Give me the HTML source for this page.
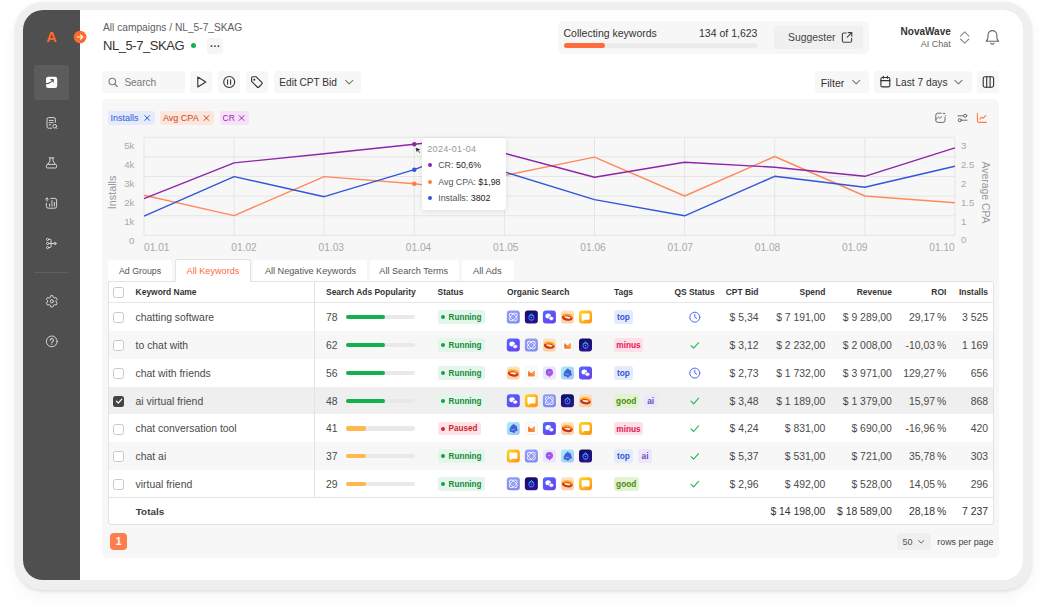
<!DOCTYPE html>
<html lang="en"><head><meta charset="utf-8"><title>NL_5-7_SKAG – All Keywords</title>
<style>
html,body{margin:0;padding:0;background:#fff;}
body{width:1046px;height:615px;position:relative;overflow:hidden;font-family:"Liberation Sans",sans-serif;}
.t{position:absolute;white-space:nowrap;}
.b{position:absolute;box-sizing:border-box;}
svg{position:absolute;left:0;top:0;overflow:visible;}
.ic{position:absolute;width:13px;height:13px;border-radius:3px;overflow:hidden;}
.ic svg{position:absolute;left:0;top:0;width:13px;height:13px;}
</style></head><body>

<div class="b" style="left:15.00px;top:2.00px;width:1016.80px;height:588.20px;background:#efefef;border-radius:28px;box-shadow:0 1.5px 3px rgba(120,70,50,0.13),0 8px 18px rgba(0,0,0,0.035);"></div>
<div class="b" style="left:23px;top:10px;width:1000px;height:570px;background:#fff;border-radius:20px;overflow:hidden;">
<div class="b" style="left:0;top:0;width:57px;height:570px;background:#4f4f4f;"></div>
</div>
<div class="t" style="top:30.30px;height:14px;line-height:14px;font-size:14.5px;color:#ff6a2b;font-weight:700;left:-48.50px;width:200px;text-align:center;">A</div>
<div class="b" style="left:34.40px;top:65.00px;width:34.40px;height:34.60px;background:#5c5c5c;border-radius:3px;"></div>
<svg width="1046" height="615" viewBox="0 0 1046 615">
<circle cx="80.1" cy="37" r="6.3" fill="#ff6a2b"/>
<path d="M77.3 37h5.4M80.5 34.8l2.2 2.2-2.2 2.2" fill="none" stroke="#fff" stroke-width="1.15" stroke-linecap="round" stroke-linejoin="round"/>
<rect x="46" y="76.8" width="11.2" height="11.2" rx="2.2" fill="#fff"/>
<path d="M46 83.6c2.2 0 4.6-.4 6.6-3.4M50.8 79.6h2.4v2.4" fill="none" stroke="#4f4f4f" stroke-width="1.1" stroke-linecap="round" stroke-linejoin="round"/>
<g fill="none" stroke="#d6d6d6" stroke-width="1" stroke-linecap="round" stroke-linejoin="round">
<path d="M51.6 128.2h-3a1.6 1.6 0 0 1-1.6-1.6v-7.4a1.6 1.6 0 0 1 1.6-1.6h5.2a1.6 1.6 0 0 1 1.6 1.6v3"/>
<path d="M49.2 120.4h4M49.2 122.6h4M49.2 124.8h1.6"/>
<circle cx="54.7" cy="126.2" r="1.85"/><path d="M56.1 127.6l.9.9"/>
<path d="M49.3 157.9h4.4M50 157.9v3l-2.2 3.5M53 157.9v3l2.2 3.5M47.4 164.4h8.2a.9.9 0 0 1 .9.9v1.8a.9.9 0 0 1-.9.9h-8.2a.9.9 0 0 1-.9-.9v-1.8a.9.9 0 0 1 .9-.9z"/>
<path d="M46.4 203.2v3.2a1.8 1.8 0 0 0 1.8 1.8h6.6a1.8 1.8 0 0 0 1.8-1.8v-6.2a1.8 1.8 0 0 0-1.8-1.8h-4"/>
<path d="M47 201v-3M45.7 199.2l1.3-1.3 1.3 1.3M49.6 206.2v-2.2M52 206.2v-5.6M54.4 206.2v-3.8"/>
<circle cx="47.6" cy="239.4" r="1.1"/><circle cx="47.6" cy="243.5" r="1.1"/><circle cx="47.6" cy="247.6" r="1.1"/><circle cx="55" cy="243.5" r="1.1"/>
<path d="M48.7 239.4h1.4a1 1 0 0 1 1 1v6.2a1 1 0 0 1-1 1h-1.4M48.7 243.5h5.2"/>
<g transform="translate(0.5 0)">
<path d="M49.76 297.29L50.21 295.70L52.39 295.70L52.84 297.29L54.01 297.96L55.60 297.56L56.69 299.44L55.55 300.63L55.55 301.97L56.69 303.16L55.60 305.04L54.01 304.64L52.84 305.31L52.39 306.90L50.21 306.90L49.76 305.31L48.59 304.64L47.00 305.04L45.91 303.16L47.05 301.97L47.05 300.63L45.91 299.44L47.00 297.56L48.59 297.96z"/>
<circle cx="51.3" cy="301.3" r="1.6"/>
<circle cx="51.3" cy="341.4" r="5.4"/>
<path d="M49.8 340.2a1.6 1.6 0 1 1 2.4 1.4c-.6.35-.9.7-.9 1.4M51.3 344.4v.1" stroke-width="1.05"/>
</g>
</g>
<path d="M34 272.4h35" stroke="#626262" stroke-width="1"/>
</svg>
<div class="t" style="top:21.30px;height:14px;line-height:14px;font-size:10.2px;color:#5e5e5e;font-weight:400;left:103.00px;">All campaigns / NL_5-7_SKAG</div>
<div class="t" style="top:39.40px;height:14px;line-height:14px;font-size:13px;color:#333;font-weight:400;letter-spacing:-0.45px;left:103.00px;">NL_5-7_SKAG</div>
<div class="b" style="left:190.70px;top:43.30px;width:5.20px;height:5.20px;background:#12b04f;border-radius:3px;"></div>
<div class="b" style="left:207.00px;top:37.80px;width:16.40px;height:16.20px;background:#f6f6f6;border-radius:3px;"></div>
<div class="t" style="top:39.60px;height:14px;line-height:14px;font-size:10px;color:#333;font-weight:700;letter-spacing:0.2px;left:115.20px;width:200px;text-align:center;">···</div>
<div class="b" style="left:558.00px;top:21.00px;width:310.50px;height:32.50px;background:#f7f7f7;border-radius:5px;"></div>
<div class="t" style="top:26.00px;height:14px;line-height:14px;font-size:10.5px;color:#333;font-weight:400;left:563.50px;">Collecting keywords</div>
<div class="t" style="top:26.00px;height:14px;line-height:14px;font-size:10.5px;color:#333;font-weight:400;right:288.60px;text-align:right;">134 of 1,623</div>
<div class="b" style="left:563.50px;top:43.00px;width:194.10px;height:5.30px;background:#ececec;border-radius:3px;"></div>
<div class="b" style="left:563.50px;top:43.00px;width:41.30px;height:5.30px;background:#ff6b3d;border-radius:3px;"></div>
<div class="b" style="left:774.00px;top:26.00px;width:89.00px;height:22.50px;background:#f0f0f0;border-radius:3px;"></div>
<div class="t" style="top:31.00px;height:14px;line-height:14px;font-size:10.4px;color:#444;font-weight:400;left:788.00px;">Suggester</div>
<div class="t" style="top:25.00px;height:14px;line-height:14px;font-size:10.0px;color:#333;font-weight:700;right:95.20px;text-align:right;">NovaWave</div>
<div class="t" style="top:36.60px;height:14px;line-height:14px;font-size:9px;color:#666;font-weight:400;right:95.20px;text-align:right;">AI Chat</div>
<div class="b" style="left:102.00px;top:71.00px;width:82.80px;height:21.80px;background:#f7f7f7;border-radius:3px;"></div>
<div class="t" style="top:75.70px;height:14px;line-height:14px;font-size:10.2px;color:#777;font-weight:400;letter-spacing:-0.12px;left:124.40px;">Search</div>
<div class="b" style="left:190.40px;top:71.00px;width:22.10px;height:21.80px;background:#f7f7f7;border-radius:3px;"></div>
<div class="b" style="left:218.20px;top:71.00px;width:21.90px;height:21.80px;background:#f7f7f7;border-radius:3px;"></div>
<div class="b" style="left:245.80px;top:71.00px;width:22.10px;height:21.80px;background:#f7f7f7;border-radius:3px;"></div>
<div class="b" style="left:273.60px;top:71.00px;width:87.40px;height:21.80px;background:#f7f7f7;border-radius:3px;"></div>
<div class="t" style="top:75.60px;height:14px;line-height:14px;font-size:10.1px;color:#333;font-weight:400;left:279.30px;">Edit CPT Bid</div>
<div class="b" style="left:815.00px;top:71.00px;width:54.00px;height:21.80px;background:#f7f7f7;border-radius:3px;"></div>
<div class="t" style="top:75.60px;height:14px;line-height:14px;font-size:10.6px;color:#333;font-weight:400;left:820.80px;">Filter</div>
<div class="b" style="left:874.00px;top:71.00px;width:97.50px;height:21.80px;background:#f7f7f7;border-radius:3px;"></div>
<div class="t" style="top:75.60px;height:14px;line-height:14px;font-size:10.2px;color:#333;font-weight:400;left:895.40px;">Last 7 days</div>
<div class="b" style="left:977.00px;top:71.00px;width:22.20px;height:21.80px;background:#f7f7f7;border-radius:3px;"></div>
<div class="b" style="left:102.00px;top:98.50px;width:897.20px;height:459.10px;background:#f7f7f7;border-radius:5px;"></div>
<div class="b" style="left:107.80px;top:111.00px;width:47.20px;height:13.80px;background:#e3ebfc;border-radius:3px;"></div>
<div class="t" style="top:111.00px;height:14px;line-height:14px;font-size:9px;color:#3558d6;font-weight:400;left:110.50px;">Installs</div>
<div class="b" style="left:160.30px;top:111.00px;width:53.70px;height:13.80px;background:#fde6dc;border-radius:3px;"></div>
<div class="t" style="top:111.00px;height:14px;line-height:14px;font-size:9px;color:#cf4519;font-weight:400;left:163.00px;">Avg CPA</div>
<div class="b" style="left:219.70px;top:111.00px;width:29.50px;height:13.80px;background:#f7e1f9;border-radius:3px;"></div>
<div class="t" style="top:111.00px;height:14px;line-height:14px;font-size:8.4px;color:#9c27b0;font-weight:400;left:222.60px;">CR</div><svg width="1046" height="615" viewBox="0 0 1046 615">
<g stroke="#e5e5e5" stroke-width="1" fill="none">
<path d="M144.0 137.3H954.9"/>
<path d="M144.0 156.9H954.9"/>
<path d="M144.0 176.5H954.9"/>
<path d="M144.0 196.1H954.9"/>
<path d="M144.0 215.7H954.9"/>
<path d="M144.0 235.4H954.9"/>
<path d="M144.0 137.3V235.4"/>
<path d="M234.1 137.3V235.4"/>
<path d="M324.2 137.3V235.4"/>
<path d="M414.3 137.3V235.4"/>
<path d="M504.4 137.3V235.4"/>
<path d="M594.5 137.3V235.4"/>
<path d="M684.6 137.3V235.4"/>
<path d="M774.7 137.3V235.4"/>
<path d="M864.8 137.3V235.4"/>
<path d="M954.9 137.3V235.4"/>
</g>
<polyline points="144.0,195.3 234.1,215.6 324.2,176.6 414.3,183.8 432.0,185.9 504.4,175.5 594.5,157.1 684.6,196.0 774.7,156.5 864.8,196.0 954.9,202.7" fill="none" stroke="#ff8a5e" stroke-width="1.4" stroke-linejoin="round"/>
<polyline points="144.0,216.2 234.1,176.6 324.2,196.7 414.3,169.7 432.0,162.9 504.4,171.8 594.5,199.6 684.6,215.8 774.7,176.3 864.8,187.3 954.9,166.2" fill="none" stroke="#3356d8" stroke-width="1.4" stroke-linejoin="round"/>
<polyline points="144.0,198.7 234.1,162.9 324.2,153.7 414.3,144.2 432.0,142.4 504.4,153.2 594.5,177.2 684.6,162.2 774.7,167.2 864.8,176.3 954.9,147.8" fill="none" stroke="#8e24a8" stroke-width="1.4" stroke-linejoin="round"/>
<circle cx="414.3" cy="144.2" r="2.25" fill="#8e24a8"/>
<circle cx="414.3" cy="169.7" r="2.25" fill="#3356d8"/>
<circle cx="414.3" cy="183.8" r="2.25" fill="#ff7a45"/>
<g font-family="Liberation Sans, sans-serif" font-size="9.6" fill="#a8a8a8">
<text x="134.4" y="149.0" text-anchor="end">5k</text>
<text x="134.4" y="168.0" text-anchor="end">4k</text>
<text x="134.4" y="187.1" text-anchor="end">3k</text>
<text x="134.4" y="206.0" text-anchor="end">2k</text>
<text x="134.4" y="224.9" text-anchor="end">1k</text>
<text x="134.4" y="243.7" text-anchor="end">0</text>
<text x="961" y="148.9">3</text>
<text x="961" y="168.0">2.5</text>
<text x="961" y="187.0">2</text>
<text x="961" y="206.1">1.5</text>
<text x="961" y="224.9">1</text>
<text x="961" y="243.2">0</text>
<text x="144.0" y="251.3" font-size="10.2">01.01</text>
<text x="231.3" y="251.3" font-size="10.2">01.02</text>
<text x="318.5" y="251.3" font-size="10.2">01.03</text>
<text x="405.8" y="251.3" font-size="10.2">01.04</text>
<text x="493.0" y="251.3" font-size="10.2">01.05</text>
<text x="580.3" y="251.3" font-size="10.2">01.06</text>
<text x="667.5" y="251.3" font-size="10.2">01.07</text>
<text x="754.8" y="251.3" font-size="10.2">01.08</text>
<text x="842.0" y="251.3" font-size="10.2">01.09</text>
<text x="929.3" y="251.3" font-size="10.2">01.10</text>
<text transform="translate(116.4 192.4) rotate(-90)" text-anchor="middle" fill="#999" font-size="10.8">Installs</text>
<text transform="translate(981.6 192.5) rotate(90)" text-anchor="middle" fill="#999" font-size="10.4">Average CPA</text>
</g>
<path d="M144.79999999999998 115.6l4.8 4.8M149.6 115.6l-4.8 4.8" stroke="#3558d6" stroke-width="1" stroke-linecap="round" fill="none"/>
<path d="M204.0 115.6l4.8 4.8M208.8 115.6l-4.8 4.8" stroke="#cf4519" stroke-width="1" stroke-linecap="round" fill="none"/>
<path d="M239.2 115.6l4.8 4.8M244.0 115.6l-4.8 4.8" stroke="#9c27b0" stroke-width="1" stroke-linecap="round" fill="none"/>
<g fill="none" stroke="#5a5a5a" stroke-width="0.9" stroke-linecap="round" stroke-linejoin="round">
<path d="M941.2 113.2h-3.4a2 2 0 0 0-2 2v5.2a2 2 0 0 0 2 2h5.2a2 2 0 0 0 2-2v-3.2"/>
<path d="M935.9 119.6l2.6-2.6 1.6 1.4 1.6-1.8M943.2 113.4h1.6M945.4 115.6v.2"/>
<path d="M958 115.8h5.6M961.4 120.2h5.6"/><circle cx="965.2" cy="115.8" r="1.55"/><circle cx="959.8" cy="120.2" r="1.55"/>
</g>
<path d="M977.4 113.2v7.6a1.6 1.6 0 0 0 1.6 1.6h7.4M979.8 119.2l2-2 1.4 1 2.6-2.6" fill="none" stroke="#ff7a45" stroke-width="1.1" stroke-linecap="round" stroke-linejoin="round"/>
<g fill="none" stroke="#333" stroke-width="1.12" stroke-linecap="round" stroke-linejoin="round">
<circle cx="112.3" cy="81.5" r="3.25" stroke="#7c7c7c"/><path d="M114.8 84l2.5 2.5" stroke="#7c7c7c"/>
<path d="M197.8 77v10l8-5z"/>
<circle cx="229.2" cy="82" r="5.5"/><path d="M227.6 79.8v4.4M230.6 79.8v4.4"/>
<path d="M251.6 78v3.4l5.6 5.6a1.2 1.2 0 0 0 1.7 0l2.9-2.9a1.2 1.2 0 0 0 0-1.7l-5.6-5.6h-3.4a1.2 1.2 0 0 0-1.2 1.2z" transform="rotate(0)"/><circle cx="254.3" cy="79.7" r="0.5"/>
<path d="M345.6 80.4l3.6 3.4 3.6-3.4" stroke="#777"/>
<path d="M852.6 80.4l3.6 3.4 3.6-3.4" stroke="#777"/>
<path d="M954.8 80.4l3.6 3.4 3.6-3.4" stroke="#777"/>
<rect x="880.9" y="77.5" width="8.9" height="9.4" rx="1.5"/><path d="M880.9 80.6h8.9M883.3 76.3v2M887.4 76.3v2"/>
<rect x="983.2" y="76.8" width="10.4" height="10.4" rx="1.6"/><path d="M986.7 76.8v10.4M990.1 76.8v10.4"/>
<path d="M846.2 33h-2.4a1.4 1.4 0 0 0-1.4 1.4v6.4a1.4 1.4 0 0 0 1.4 1.4h6.4a1.4 1.4 0 0 0 1.4-1.4v-2.4M848.2 32.6h3.6v3.6M851.6 32.8l-4.4 4.4" stroke="#444"/>
<path d="M960.5 36.1l4.2-4.2 4.2 4.2M960.5 39l4.2 4.2 4.2-4.2" stroke="#8c8c8c"/>
<path d="M986.2 41.2h12.4c-1.2-1-1.8-2.2-1.8-4.2v-2a4.4 4.4 0 0 0-8.8 0v2c0 2-.6 3.2-1.8 4.2zM990.8 43.2a1.8 1.8 0 0 0 3.2 0" stroke="#666"/>
</g>
</svg>
<div class="b" style="left:421.60px;top:137.90px;width:84.60px;height:71.70px;background:#fff;border-radius:3px;box-shadow:0 1px 6px rgba(0,0,0,0.10);"></div>
<div class="t" style="top:141.50px;height:14px;line-height:14px;font-size:9px;color:#999;font-weight:400;letter-spacing:0.3px;left:427.30px;">2024-01-04</div>
<div class="b" style="left:428.20px;top:163.10px;width:4.00px;height:4.00px;background:#8e24a8;border-radius:2px;"></div>
<div class="t" style="top:158.10px;height:14px;line-height:14px;font-size:8.9px;color:#333;font-weight:400;left:438.20px;"><span style="color:#555">CR:</span> <span style="color:#222">50,6%</span></div>
<div class="b" style="left:428.20px;top:179.75px;width:4.00px;height:4.00px;background:#ff7a45;border-radius:2px;"></div>
<div class="t" style="top:174.75px;height:14px;line-height:14px;font-size:8.9px;color:#333;font-weight:400;left:438.20px;"><span style="color:#555">Avg CPA:</span> <span style="color:#222">$1,98</span></div>
<div class="b" style="left:428.20px;top:196.40px;width:4.00px;height:4.00px;background:#3356d8;border-radius:2px;"></div>
<div class="t" style="top:191.40px;height:14px;line-height:14px;font-size:8.9px;color:#333;font-weight:400;left:438.20px;"><span style="color:#555">Installs:</span> <span style="color:#222">3802</span></div>
<svg width="1046" height="615" viewBox="0 0 1046 615"><path d="M415.6 147.4l5.2 2-2.2.8 1.6 2.2-.9.6-1.6-2.2-1.3 1.7z" fill="#222" stroke="#fff" stroke-width="0.4"/></svg><div class="b" style="left:108.00px;top:260.20px;width:64.30px;height:21.20px;background:#fff;border-radius:0px;border-radius:3px 3px 0 0;"></div>
<div class="t" style="top:264.00px;height:14px;line-height:14px;font-size:8.85px;color:#555;font-weight:400;left:118.90px;">Ad Groups</div>
<div class="b" style="left:175.40px;top:259.00px;width:75.20px;height:23.40px;background:#fff;border-radius:0px;border:1px solid #e3e3e3;border-bottom:none;border-radius:3px 3px 0 0;z-index:2;"></div>
<div class="t" style="top:264.00px;height:14px;line-height:14px;font-size:9.15px;color:#ff6b3d;font-weight:400;left:186.60px;z-index:3;">All Keywords</div>
<div class="b" style="left:253.40px;top:260.20px;width:113.30px;height:21.20px;background:#fff;border-radius:0px;border-radius:3px 3px 0 0;"></div>
<div class="t" style="top:264.00px;height:14px;line-height:14px;font-size:9.15px;color:#555;font-weight:400;left:264.90px;">All Negative Keywords</div>
<div class="b" style="left:369.60px;top:260.20px;width:89.20px;height:21.20px;background:#fff;border-radius:0px;border-radius:3px 3px 0 0;"></div>
<div class="t" style="top:264.00px;height:14px;line-height:14px;font-size:9.15px;color:#555;font-weight:400;left:379.30px;">All Search Terms</div>
<div class="b" style="left:462.00px;top:260.20px;width:52.00px;height:21.20px;background:#fff;border-radius:0px;border-radius:3px 3px 0 0;"></div>
<div class="t" style="top:264.00px;height:14px;line-height:14px;font-size:9.4px;color:#555;font-weight:400;left:473.00px;">All Ads</div>
<div class="b" style="left:108.00px;top:281.40px;width:886.00px;height:243.40px;background:#fff;border-radius:0px;border:1px solid #e3e3e3;border-radius:0 3px 3px 3px;"></div>
<div class="b" style="left:109.00px;top:331.00px;width:884.00px;height:27.90px;background:#f7f7f7;border-radius:0px;"></div>
<div class="b" style="left:109.00px;top:386.60px;width:884.00px;height:27.90px;background:#efefef;border-radius:0px;"></div>
<div class="b" style="left:109.00px;top:442.00px;width:884.00px;height:27.90px;background:#f7f7f7;border-radius:0px;"></div>
<div class="b" style="left:109.00px;top:302.40px;width:884.00px;height:1.00px;background:#e6e6e6;border-radius:0px;"></div>
<div class="b" style="left:109.00px;top:496.90px;width:884.00px;height:1.00px;background:#e3e3e3;border-radius:0px;"></div>
<div class="b" style="left:314.00px;top:282.40px;width:1.00px;height:215.00px;background:#e3e3e3;border-radius:0px;"></div>
<div class="b" style="left:113.00px;top:286.60px;width:11.00px;height:11.00px;background:#fff;border-radius:2.5px;border:1px solid #c8c8c8;"></div>
<div class="t" style="top:284.85px;height:14px;line-height:14px;font-size:8.45px;color:#333;font-weight:700;left:135.60px;">Keyword Name</div>
<div class="t" style="top:284.85px;height:14px;line-height:14px;font-size:8.45px;color:#333;font-weight:700;left:326.00px;">Search Ads Popularity</div>
<div class="t" style="top:284.85px;height:14px;line-height:14px;font-size:8.45px;color:#333;font-weight:700;left:437.60px;">Status</div>
<div class="t" style="top:284.85px;height:14px;line-height:14px;font-size:8.45px;color:#333;font-weight:700;left:507.00px;">Organic Search</div>
<div class="t" style="top:284.85px;height:14px;line-height:14px;font-size:8.45px;color:#333;font-weight:700;left:614.00px;">Tags</div>
<div class="t" style="top:284.85px;height:14px;line-height:14px;font-size:8.45px;color:#333;font-weight:700;left:674.40px;">QS Status</div>
<div class="t" style="top:284.85px;height:14px;line-height:14px;font-size:8.45px;color:#333;font-weight:700;right:287.50px;text-align:right;">CPT Bid</div>
<div class="t" style="top:284.85px;height:14px;line-height:14px;font-size:8.45px;color:#333;font-weight:700;right:220.70px;text-align:right;">Spend</div>
<div class="t" style="top:284.85px;height:14px;line-height:14px;font-size:8.45px;color:#333;font-weight:700;right:154.10px;text-align:right;">Revenue</div>
<div class="t" style="top:284.85px;height:14px;line-height:14px;font-size:8.45px;color:#333;font-weight:700;right:99.70px;text-align:right;">ROI</div>
<div class="t" style="top:284.85px;height:14px;line-height:14px;font-size:8.45px;color:#333;font-weight:700;right:58.00px;text-align:right;">Installs</div>
<div class="b" style="left:113.00px;top:311.50px;width:11.00px;height:11.00px;background:#fff;border-radius:2.5px;border:1px solid #c8c8c8;"></div>
<div class="t" style="top:310.95px;height:14px;line-height:14px;font-size:10.4px;color:#4a4a4a;font-weight:400;left:135.60px;">chatting software</div>
<div class="t" style="top:310.95px;height:14px;line-height:14px;font-size:10.4px;color:#4a4a4a;font-weight:400;left:326.00px;">78</div>
<div class="b" style="left:346.00px;top:315.05px;width:69.00px;height:4.40px;background:#e9e9e9;border-radius:2.2px;"></div>
<div class="b" style="left:346.00px;top:315.05px;width:39.00px;height:4.40px;background:#12b04f;border-radius:2.2px;"></div>
<div class="b" style="left:437.50px;top:310.35px;width:47.50px;height:13.80px;background:#e4f6ea;border-radius:2.5px;"></div>
<div class="b" style="left:441.20px;top:315.25px;width:4.00px;height:4.00px;background:#12a04a;border-radius:2px;"></div>
<div class="t" style="top:310.95px;height:14px;line-height:14px;font-size:8.15px;color:#178a42;font-weight:700;left:448.60px;">Running</div>
<div class="ic" style="left:0;top:0;transform:translate(506.80px,310.60px);background:linear-gradient(160deg,#959ff9,#7c87ee);"><svg viewBox="0 0 13 13"><g fill="none" stroke="#fff" stroke-width="0.9" opacity="0.92"><ellipse cx="6.5" cy="6.5" rx="4.9" ry="2.5" transform="rotate(45 6.5 6.5)"/><ellipse cx="6.5" cy="6.5" rx="4.9" ry="2.5" transform="rotate(-45 6.5 6.5)"/></g><circle cx="6.5" cy="6.5" r="0.9" fill="#aab3fb"/></svg></div>
<div class="ic" style="left:0;top:0;transform:translate(524.85px,310.60px);background:linear-gradient(170deg,#150c66,#2a1590);"><svg viewBox="0 0 13 13"><g fill="none" stroke-linecap="round"><circle cx="6.5" cy="7" r="2.5" stroke="#3a6cf5" stroke-width="1.1"/><path d="M4.6 5.2L6.6 3.2l2 2" stroke="#25c6e6" stroke-width="1"/><path d="M8.6 8.6a2.5 2.5 0 0 1-3.4.6" stroke="#6a4df0" stroke-width="1.1"/></g><circle cx="6.5" cy="6.8" r="0.7" fill="#25c6e6"/></svg></div>
<div class="ic" style="left:0;top:0;transform:translate(542.90px,310.60px);background:linear-gradient(140deg,#4a6cff,#6e3bee);"><svg viewBox="0 0 13 13"><ellipse cx="5.3" cy="5.5" rx="2.8" ry="2.5" fill="#fff"/><ellipse cx="8.4" cy="7.9" rx="2.4" ry="2" fill="#fff" stroke="#5b4cf2" stroke-width="0.6"/></svg></div>
<div class="ic" style="left:0;top:0;transform:translate(560.95px,310.60px);background:linear-gradient(180deg,#fde2c6,#f9cfa6);"><svg viewBox="0 0 13 13"><g transform="rotate(9 6.5 6.5)"><ellipse cx="6.5" cy="6.9" rx="4.3" ry="2.1" fill="#fdeee6" stroke="#cf3310" stroke-width="2.2"/><path d="M2.1 6.3a4.4 2.3 0 0 1 8.8 0" fill="none" stroke="#ffac1c" stroke-width="2"/></g></svg></div>
<div class="ic" style="left:0;top:0;transform:translate(579.00px,310.60px);background:linear-gradient(135deg,#ffd822,#ff8f10);"><svg viewBox="0 0 13 13"><path d="M3.3 2.9h6.6a.7.7 0 0 1 .7.7v4.9a.7.7 0 0 1-.7.7H5.3L3.2 10.8V9.2a.7.7 0 0 1-.6-.7V3.6a.7.7 0 0 1 .7-.7z" fill="#fff"/></svg></div>
<div class="b" style="left:614.00px;top:310.45px;width:18.90px;height:13.60px;background:#e3ebfc;border-radius:2.5px;"></div>
<div class="t" style="top:310.45px;height:14px;line-height:14px;font-size:8.3px;color:#3558d6;font-weight:700;left:523.45px;width:200px;text-align:center;">top</div>
<div class="t" style="top:310.95px;height:14px;line-height:14px;font-size:10.4px;color:#4a4a4a;font-weight:400;right:287.50px;text-align:right;">$ 5,34</div>
<div class="t" style="top:310.95px;height:14px;line-height:14px;font-size:10.4px;color:#4a4a4a;font-weight:400;right:220.70px;text-align:right;">$ 7 191,00</div>
<div class="t" style="top:310.95px;height:14px;line-height:14px;font-size:10.4px;color:#4a4a4a;font-weight:400;right:154.10px;text-align:right;">$ 9 289,00</div>
<div class="t" style="top:310.95px;height:14px;line-height:14px;font-size:10.4px;color:#4a4a4a;font-weight:400;right:99.70px;text-align:right;">29,17&thinsp;%</div>
<div class="t" style="top:310.95px;height:14px;line-height:14px;font-size:10.4px;color:#4a4a4a;font-weight:400;right:58.00px;text-align:right;">3 525</div>
<div class="b" style="left:113.00px;top:339.50px;width:11.00px;height:11.00px;background:#fff;border-radius:2.5px;border:1px solid #c8c8c8;"></div>
<div class="t" style="top:338.95px;height:14px;line-height:14px;font-size:10.4px;color:#4a4a4a;font-weight:400;left:135.60px;">to chat with</div>
<div class="t" style="top:338.95px;height:14px;line-height:14px;font-size:10.4px;color:#4a4a4a;font-weight:400;left:326.00px;">62</div>
<div class="b" style="left:346.00px;top:343.05px;width:69.00px;height:4.40px;background:#e9e9e9;border-radius:2.2px;"></div>
<div class="b" style="left:346.00px;top:343.05px;width:39.00px;height:4.40px;background:#12b04f;border-radius:2.2px;"></div>
<div class="b" style="left:437.50px;top:338.35px;width:47.50px;height:13.80px;background:#e4f6ea;border-radius:2.5px;"></div>
<div class="b" style="left:441.20px;top:343.25px;width:4.00px;height:4.00px;background:#12a04a;border-radius:2px;"></div>
<div class="t" style="top:338.95px;height:14px;line-height:14px;font-size:8.15px;color:#178a42;font-weight:700;left:448.60px;">Running</div>
<div class="ic" style="left:0;top:0;transform:translate(506.80px,338.60px);background:linear-gradient(140deg,#4a6cff,#6e3bee);"><svg viewBox="0 0 13 13"><ellipse cx="5.3" cy="5.5" rx="2.8" ry="2.5" fill="#fff"/><ellipse cx="8.4" cy="7.9" rx="2.4" ry="2" fill="#fff" stroke="#5b4cf2" stroke-width="0.6"/></svg></div>
<div class="ic" style="left:0;top:0;transform:translate(524.85px,338.60px);background:linear-gradient(160deg,#959ff9,#7c87ee);"><svg viewBox="0 0 13 13"><g fill="none" stroke="#fff" stroke-width="0.9" opacity="0.92"><ellipse cx="6.5" cy="6.5" rx="4.9" ry="2.5" transform="rotate(45 6.5 6.5)"/><ellipse cx="6.5" cy="6.5" rx="4.9" ry="2.5" transform="rotate(-45 6.5 6.5)"/></g><circle cx="6.5" cy="6.5" r="0.9" fill="#aab3fb"/></svg></div>
<div class="ic" style="left:0;top:0;transform:translate(542.90px,338.60px);background:linear-gradient(180deg,#fde2c6,#f9cfa6);"><svg viewBox="0 0 13 13"><g transform="rotate(9 6.5 6.5)"><ellipse cx="6.5" cy="6.9" rx="4.3" ry="2.1" fill="#fdeee6" stroke="#cf3310" stroke-width="2.2"/><path d="M2.1 6.3a4.4 2.3 0 0 1 8.8 0" fill="none" stroke="#ffac1c" stroke-width="2"/></g></svg></div>
<div class="ic" style="left:0;top:0;transform:translate(560.95px,338.60px);background:#fbfbfb;box-shadow:inset 0 0 0 0.6px #ececec;"><svg viewBox="0 0 13 13"><path d="M3.3 4.3l3.2 2.9 3.2-2.9v5.6H3.3z" fill="#f2711c"/><path d="M6.5 7.2l3.2-2.9v5.6z" fill="#f89a4a"/><path d="M3.3 9.9l3.2-2.7 3.2 2.7z" fill="#f58338"/></svg></div>
<div class="ic" style="left:0;top:0;transform:translate(579.00px,338.60px);background:linear-gradient(170deg,#150c66,#2a1590);"><svg viewBox="0 0 13 13"><g fill="none" stroke-linecap="round"><circle cx="6.5" cy="7" r="2.5" stroke="#3a6cf5" stroke-width="1.1"/><path d="M4.6 5.2L6.6 3.2l2 2" stroke="#25c6e6" stroke-width="1"/><path d="M8.6 8.6a2.5 2.5 0 0 1-3.4.6" stroke="#6a4df0" stroke-width="1.1"/></g><circle cx="6.5" cy="6.8" r="0.7" fill="#25c6e6"/></svg></div>
<div class="b" style="left:614.00px;top:338.45px;width:29.00px;height:13.60px;background:#fde0e9;border-radius:2.5px;"></div>
<div class="t" style="top:338.45px;height:14px;line-height:14px;font-size:8.3px;color:#e8174f;font-weight:700;left:528.50px;width:200px;text-align:center;">minus</div>
<div class="t" style="top:338.95px;height:14px;line-height:14px;font-size:10.4px;color:#4a4a4a;font-weight:400;right:287.50px;text-align:right;">$ 3,12</div>
<div class="t" style="top:338.95px;height:14px;line-height:14px;font-size:10.4px;color:#4a4a4a;font-weight:400;right:220.70px;text-align:right;">$ 2 232,00</div>
<div class="t" style="top:338.95px;height:14px;line-height:14px;font-size:10.4px;color:#4a4a4a;font-weight:400;right:154.10px;text-align:right;">$ 2 008,00</div>
<div class="t" style="top:338.95px;height:14px;line-height:14px;font-size:10.4px;color:#4a4a4a;font-weight:400;right:99.70px;text-align:right;">-10,03&thinsp;%</div>
<div class="t" style="top:338.95px;height:14px;line-height:14px;font-size:10.4px;color:#4a4a4a;font-weight:400;right:58.00px;text-align:right;">1 169</div>
<div class="b" style="left:113.00px;top:367.50px;width:11.00px;height:11.00px;background:#fff;border-radius:2.5px;border:1px solid #c8c8c8;"></div>
<div class="t" style="top:366.75px;height:14px;line-height:14px;font-size:10.4px;color:#4a4a4a;font-weight:400;left:135.60px;">chat with friends</div>
<div class="t" style="top:366.75px;height:14px;line-height:14px;font-size:10.4px;color:#4a4a4a;font-weight:400;left:326.00px;">56</div>
<div class="b" style="left:346.00px;top:370.85px;width:69.00px;height:4.40px;background:#e9e9e9;border-radius:2.2px;"></div>
<div class="b" style="left:346.00px;top:370.85px;width:39.00px;height:4.40px;background:#12b04f;border-radius:2.2px;"></div>
<div class="b" style="left:437.50px;top:366.15px;width:47.50px;height:13.80px;background:#e4f6ea;border-radius:2.5px;"></div>
<div class="b" style="left:441.20px;top:371.05px;width:4.00px;height:4.00px;background:#12a04a;border-radius:2px;"></div>
<div class="t" style="top:366.75px;height:14px;line-height:14px;font-size:8.15px;color:#178a42;font-weight:700;left:448.60px;">Running</div>
<div class="ic" style="left:0;top:0;transform:translate(506.80px,366.40px);background:linear-gradient(180deg,#fde2c6,#f9cfa6);"><svg viewBox="0 0 13 13"><g transform="rotate(9 6.5 6.5)"><ellipse cx="6.5" cy="6.9" rx="4.3" ry="2.1" fill="#fdeee6" stroke="#cf3310" stroke-width="2.2"/><path d="M2.1 6.3a4.4 2.3 0 0 1 8.8 0" fill="none" stroke="#ffac1c" stroke-width="2"/></g></svg></div>
<div class="ic" style="left:0;top:0;transform:translate(524.85px,366.40px);background:#fbfbfb;box-shadow:inset 0 0 0 0.6px #ececec;"><svg viewBox="0 0 13 13"><path d="M3.3 4.3l3.2 2.9 3.2-2.9v5.6H3.3z" fill="#f2711c"/><path d="M6.5 7.2l3.2-2.9v5.6z" fill="#f89a4a"/><path d="M3.3 9.9l3.2-2.7 3.2 2.7z" fill="#f58338"/></svg></div>
<div class="ic" style="left:0;top:0;transform:translate(542.90px,366.40px);background:#ebe6fb;"><svg viewBox="0 0 13 13"><defs><linearGradient id="gG" x1="0" y1="0" x2="1" y2="1"><stop offset="0" stop-color="#6f5ff5"/><stop offset="1" stop-color="#c84ce0"/></linearGradient></defs><circle cx="6.5" cy="6" r="3.6" fill="url(#gG)"/><path d="M5.4 9.2l1.2 1.6 1.2-1.7z" fill="#b04de6"/><path d="M5.2 5.9h2.2" stroke="#d9c6ff" stroke-width="0.7"/></svg></div>
<div class="ic" style="left:0;top:0;transform:translate(560.95px,366.40px);background:linear-gradient(135deg,#aaeef4,#a2c6f8);"><svg viewBox="0 0 13 13"><g transform="translate(6.5 6.6) scale(1.16) translate(-6.5 -6.6)"><path d="M6.9 2.5l1.3 1.6 1.2.2.4 2 .6 2.2-2 .4-.4 1-1.3.9-1-1.2-2.2-.2-.3-2.6 1.5-2.3z" fill="#4060d8"/></g><path d="M4.4 7.6l3.6.4" stroke="#b8d4fa" stroke-width="0.6"/></svg></div>
<div class="ic" style="left:0;top:0;transform:translate(579.00px,366.40px);background:linear-gradient(140deg,#4a6cff,#6e3bee);"><svg viewBox="0 0 13 13"><ellipse cx="5.3" cy="5.5" rx="2.8" ry="2.5" fill="#fff"/><ellipse cx="8.4" cy="7.9" rx="2.4" ry="2" fill="#fff" stroke="#5b4cf2" stroke-width="0.6"/></svg></div>
<div class="b" style="left:614.00px;top:366.25px;width:18.90px;height:13.60px;background:#e3ebfc;border-radius:2.5px;"></div>
<div class="t" style="top:366.25px;height:14px;line-height:14px;font-size:8.3px;color:#3558d6;font-weight:700;left:523.45px;width:200px;text-align:center;">top</div>
<div class="t" style="top:366.75px;height:14px;line-height:14px;font-size:10.4px;color:#4a4a4a;font-weight:400;right:287.50px;text-align:right;">$ 2,73</div>
<div class="t" style="top:366.75px;height:14px;line-height:14px;font-size:10.4px;color:#4a4a4a;font-weight:400;right:220.70px;text-align:right;">$ 1 732,00</div>
<div class="t" style="top:366.75px;height:14px;line-height:14px;font-size:10.4px;color:#4a4a4a;font-weight:400;right:154.10px;text-align:right;">$ 3 971,00</div>
<div class="t" style="top:366.75px;height:14px;line-height:14px;font-size:10.4px;color:#4a4a4a;font-weight:400;right:99.70px;text-align:right;">129,27&thinsp;%</div>
<div class="t" style="top:366.75px;height:14px;line-height:14px;font-size:10.4px;color:#4a4a4a;font-weight:400;right:58.00px;text-align:right;">656</div>
<div class="b" style="left:113.00px;top:395.50px;width:11.00px;height:11.00px;background:#444;border-radius:2.5px;"></div>
<div class="t" style="top:394.55px;height:14px;line-height:14px;font-size:10.4px;color:#4a4a4a;font-weight:400;left:135.60px;">ai virtual friend</div>
<div class="t" style="top:394.55px;height:14px;line-height:14px;font-size:10.4px;color:#4a4a4a;font-weight:400;left:326.00px;">48</div>
<div class="b" style="left:346.00px;top:398.65px;width:69.00px;height:4.40px;background:#e9e9e9;border-radius:2.2px;"></div>
<div class="b" style="left:346.00px;top:398.65px;width:39.00px;height:4.40px;background:#12b04f;border-radius:2.2px;"></div>
<div class="b" style="left:437.50px;top:393.95px;width:47.50px;height:13.80px;background:#e4f6ea;border-radius:2.5px;"></div>
<div class="b" style="left:441.20px;top:398.85px;width:4.00px;height:4.00px;background:#12a04a;border-radius:2px;"></div>
<div class="t" style="top:394.55px;height:14px;line-height:14px;font-size:8.15px;color:#178a42;font-weight:700;left:448.60px;">Running</div>
<div class="ic" style="left:0;top:0;transform:translate(506.80px,394.20px);background:linear-gradient(140deg,#4a6cff,#6e3bee);"><svg viewBox="0 0 13 13"><ellipse cx="5.3" cy="5.5" rx="2.8" ry="2.5" fill="#fff"/><ellipse cx="8.4" cy="7.9" rx="2.4" ry="2" fill="#fff" stroke="#5b4cf2" stroke-width="0.6"/></svg></div>
<div class="ic" style="left:0;top:0;transform:translate(524.85px,394.20px);background:linear-gradient(135deg,#ffd822,#ff8f10);"><svg viewBox="0 0 13 13"><path d="M3.3 2.9h6.6a.7.7 0 0 1 .7.7v4.9a.7.7 0 0 1-.7.7H5.3L3.2 10.8V9.2a.7.7 0 0 1-.6-.7V3.6a.7.7 0 0 1 .7-.7z" fill="#fff"/></svg></div>
<div class="ic" style="left:0;top:0;transform:translate(542.90px,394.20px);background:linear-gradient(160deg,#959ff9,#7c87ee);"><svg viewBox="0 0 13 13"><g fill="none" stroke="#fff" stroke-width="0.9" opacity="0.92"><ellipse cx="6.5" cy="6.5" rx="4.9" ry="2.5" transform="rotate(45 6.5 6.5)"/><ellipse cx="6.5" cy="6.5" rx="4.9" ry="2.5" transform="rotate(-45 6.5 6.5)"/></g><circle cx="6.5" cy="6.5" r="0.9" fill="#aab3fb"/></svg></div>
<div class="ic" style="left:0;top:0;transform:translate(560.95px,394.20px);background:linear-gradient(170deg,#150c66,#2a1590);"><svg viewBox="0 0 13 13"><g fill="none" stroke-linecap="round"><circle cx="6.5" cy="7" r="2.5" stroke="#3a6cf5" stroke-width="1.1"/><path d="M4.6 5.2L6.6 3.2l2 2" stroke="#25c6e6" stroke-width="1"/><path d="M8.6 8.6a2.5 2.5 0 0 1-3.4.6" stroke="#6a4df0" stroke-width="1.1"/></g><circle cx="6.5" cy="6.8" r="0.7" fill="#25c6e6"/></svg></div>
<div class="ic" style="left:0;top:0;transform:translate(579.00px,394.20px);background:linear-gradient(180deg,#fde2c6,#f9cfa6);"><svg viewBox="0 0 13 13"><g transform="rotate(9 6.5 6.5)"><ellipse cx="6.5" cy="6.9" rx="4.3" ry="2.1" fill="#fdeee6" stroke="#cf3310" stroke-width="2.2"/><path d="M2.1 6.3a4.4 2.3 0 0 1 8.8 0" fill="none" stroke="#ffac1c" stroke-width="2"/></g></svg></div>
<div class="b" style="left:614.00px;top:394.05px;width:24.50px;height:13.60px;background:#e3f3cf;border-radius:2.5px;"></div>
<div class="t" style="top:394.05px;height:14px;line-height:14px;font-size:8.3px;color:#4c8a14;font-weight:700;left:526.25px;width:200px;text-align:center;">good</div>
<div class="b" style="left:643.90px;top:394.05px;width:13.50px;height:13.60px;background:#ece7fa;border-radius:2.5px;"></div>
<div class="t" style="top:394.05px;height:14px;line-height:14px;font-size:8.3px;color:#6a4fc4;font-weight:700;left:550.65px;width:200px;text-align:center;">ai</div>
<div class="t" style="top:394.55px;height:14px;line-height:14px;font-size:10.4px;color:#4a4a4a;font-weight:400;right:287.50px;text-align:right;">$ 3,48</div>
<div class="t" style="top:394.55px;height:14px;line-height:14px;font-size:10.4px;color:#4a4a4a;font-weight:400;right:220.70px;text-align:right;">$ 1 189,00</div>
<div class="t" style="top:394.55px;height:14px;line-height:14px;font-size:10.4px;color:#4a4a4a;font-weight:400;right:154.10px;text-align:right;">$ 1 379,00</div>
<div class="t" style="top:394.55px;height:14px;line-height:14px;font-size:10.4px;color:#4a4a4a;font-weight:400;right:99.70px;text-align:right;">15,97&thinsp;%</div>
<div class="t" style="top:394.55px;height:14px;line-height:14px;font-size:10.4px;color:#4a4a4a;font-weight:400;right:58.00px;text-align:right;">868</div>
<div class="b" style="left:113.00px;top:423.50px;width:11.00px;height:11.00px;background:#fff;border-radius:2.5px;border:1px solid #c8c8c8;"></div>
<div class="t" style="top:422.25px;height:14px;line-height:14px;font-size:10.4px;color:#4a4a4a;font-weight:400;left:135.60px;">chat conversation tool</div>
<div class="t" style="top:422.25px;height:14px;line-height:14px;font-size:10.4px;color:#4a4a4a;font-weight:400;left:326.00px;">41</div>
<div class="b" style="left:346.00px;top:426.35px;width:69.00px;height:4.40px;background:#e9e9e9;border-radius:2.2px;"></div>
<div class="b" style="left:346.00px;top:426.35px;width:20.00px;height:4.40px;background:#ffb84d;border-radius:2.2px;"></div>
<div class="b" style="left:437.50px;top:421.65px;width:43.50px;height:13.80px;background:#fde3e5;border-radius:2.5px;"></div>
<div class="b" style="left:441.20px;top:426.55px;width:4.00px;height:4.00px;background:#e0202f;border-radius:2px;"></div>
<div class="t" style="top:422.25px;height:14px;line-height:14px;font-size:8.15px;color:#d21f2e;font-weight:700;left:448.60px;">Paused</div>
<div class="ic" style="left:0;top:0;transform:translate(506.80px,421.90px);background:linear-gradient(135deg,#aaeef4,#a2c6f8);"><svg viewBox="0 0 13 13"><g transform="translate(6.5 6.6) scale(1.16) translate(-6.5 -6.6)"><path d="M6.9 2.5l1.3 1.6 1.2.2.4 2 .6 2.2-2 .4-.4 1-1.3.9-1-1.2-2.2-.2-.3-2.6 1.5-2.3z" fill="#4060d8"/></g><path d="M4.4 7.6l3.6.4" stroke="#b8d4fa" stroke-width="0.6"/></svg></div>
<div class="ic" style="left:0;top:0;transform:translate(524.85px,421.90px);background:#fbfbfb;box-shadow:inset 0 0 0 0.6px #ececec;"><svg viewBox="0 0 13 13"><path d="M3.3 4.3l3.2 2.9 3.2-2.9v5.6H3.3z" fill="#f2711c"/><path d="M6.5 7.2l3.2-2.9v5.6z" fill="#f89a4a"/><path d="M3.3 9.9l3.2-2.7 3.2 2.7z" fill="#f58338"/></svg></div>
<div class="ic" style="left:0;top:0;transform:translate(542.90px,421.90px);background:linear-gradient(140deg,#4a6cff,#6e3bee);"><svg viewBox="0 0 13 13"><ellipse cx="5.3" cy="5.5" rx="2.8" ry="2.5" fill="#fff"/><ellipse cx="8.4" cy="7.9" rx="2.4" ry="2" fill="#fff" stroke="#5b4cf2" stroke-width="0.6"/></svg></div>
<div class="ic" style="left:0;top:0;transform:translate(560.95px,421.90px);background:linear-gradient(180deg,#fde2c6,#f9cfa6);"><svg viewBox="0 0 13 13"><g transform="rotate(9 6.5 6.5)"><ellipse cx="6.5" cy="6.9" rx="4.3" ry="2.1" fill="#fdeee6" stroke="#cf3310" stroke-width="2.2"/><path d="M2.1 6.3a4.4 2.3 0 0 1 8.8 0" fill="none" stroke="#ffac1c" stroke-width="2"/></g></svg></div>
<div class="ic" style="left:0;top:0;transform:translate(579.00px,421.90px);background:linear-gradient(135deg,#ffd822,#ff8f10);"><svg viewBox="0 0 13 13"><path d="M3.3 2.9h6.6a.7.7 0 0 1 .7.7v4.9a.7.7 0 0 1-.7.7H5.3L3.2 10.8V9.2a.7.7 0 0 1-.6-.7V3.6a.7.7 0 0 1 .7-.7z" fill="#fff"/></svg></div>
<div class="b" style="left:614.00px;top:421.75px;width:29.00px;height:13.60px;background:#fde0e9;border-radius:2.5px;"></div>
<div class="t" style="top:421.75px;height:14px;line-height:14px;font-size:8.3px;color:#e8174f;font-weight:700;left:528.50px;width:200px;text-align:center;">minus</div>
<div class="t" style="top:422.25px;height:14px;line-height:14px;font-size:10.4px;color:#4a4a4a;font-weight:400;right:287.50px;text-align:right;">$ 4,24</div>
<div class="t" style="top:422.25px;height:14px;line-height:14px;font-size:10.4px;color:#4a4a4a;font-weight:400;right:220.70px;text-align:right;">$ 831,00</div>
<div class="t" style="top:422.25px;height:14px;line-height:14px;font-size:10.4px;color:#4a4a4a;font-weight:400;right:154.10px;text-align:right;">$ 690,00</div>
<div class="t" style="top:422.25px;height:14px;line-height:14px;font-size:10.4px;color:#4a4a4a;font-weight:400;right:99.70px;text-align:right;">-16,96&thinsp;%</div>
<div class="t" style="top:422.25px;height:14px;line-height:14px;font-size:10.4px;color:#4a4a4a;font-weight:400;right:58.00px;text-align:right;">420</div>
<div class="b" style="left:113.00px;top:450.50px;width:11.00px;height:11.00px;background:#fff;border-radius:2.5px;border:1px solid #c8c8c8;"></div>
<div class="t" style="top:449.95px;height:14px;line-height:14px;font-size:10.4px;color:#4a4a4a;font-weight:400;left:135.60px;">chat ai</div>
<div class="t" style="top:449.95px;height:14px;line-height:14px;font-size:10.4px;color:#4a4a4a;font-weight:400;left:326.00px;">37</div>
<div class="b" style="left:346.00px;top:454.05px;width:69.00px;height:4.40px;background:#e9e9e9;border-radius:2.2px;"></div>
<div class="b" style="left:346.00px;top:454.05px;width:20.00px;height:4.40px;background:#ffb84d;border-radius:2.2px;"></div>
<div class="b" style="left:437.50px;top:449.35px;width:47.50px;height:13.80px;background:#e4f6ea;border-radius:2.5px;"></div>
<div class="b" style="left:441.20px;top:454.25px;width:4.00px;height:4.00px;background:#12a04a;border-radius:2px;"></div>
<div class="t" style="top:449.95px;height:14px;line-height:14px;font-size:8.15px;color:#178a42;font-weight:700;left:448.60px;">Running</div>
<div class="ic" style="left:0;top:0;transform:translate(506.80px,449.60px);background:linear-gradient(135deg,#ffd822,#ff8f10);"><svg viewBox="0 0 13 13"><path d="M3.3 2.9h6.6a.7.7 0 0 1 .7.7v4.9a.7.7 0 0 1-.7.7H5.3L3.2 10.8V9.2a.7.7 0 0 1-.6-.7V3.6a.7.7 0 0 1 .7-.7z" fill="#fff"/></svg></div>
<div class="ic" style="left:0;top:0;transform:translate(524.85px,449.60px);background:linear-gradient(160deg,#959ff9,#7c87ee);"><svg viewBox="0 0 13 13"><g fill="none" stroke="#fff" stroke-width="0.9" opacity="0.92"><ellipse cx="6.5" cy="6.5" rx="4.9" ry="2.5" transform="rotate(45 6.5 6.5)"/><ellipse cx="6.5" cy="6.5" rx="4.9" ry="2.5" transform="rotate(-45 6.5 6.5)"/></g><circle cx="6.5" cy="6.5" r="0.9" fill="#aab3fb"/></svg></div>
<div class="ic" style="left:0;top:0;transform:translate(542.90px,449.60px);background:#ebe6fb;"><svg viewBox="0 0 13 13"><defs><linearGradient id="gG" x1="0" y1="0" x2="1" y2="1"><stop offset="0" stop-color="#6f5ff5"/><stop offset="1" stop-color="#c84ce0"/></linearGradient></defs><circle cx="6.5" cy="6" r="3.6" fill="url(#gG)"/><path d="M5.4 9.2l1.2 1.6 1.2-1.7z" fill="#b04de6"/><path d="M5.2 5.9h2.2" stroke="#d9c6ff" stroke-width="0.7"/></svg></div>
<div class="ic" style="left:0;top:0;transform:translate(560.95px,449.60px);background:linear-gradient(135deg,#aaeef4,#a2c6f8);"><svg viewBox="0 0 13 13"><g transform="translate(6.5 6.6) scale(1.16) translate(-6.5 -6.6)"><path d="M6.9 2.5l1.3 1.6 1.2.2.4 2 .6 2.2-2 .4-.4 1-1.3.9-1-1.2-2.2-.2-.3-2.6 1.5-2.3z" fill="#4060d8"/></g><path d="M4.4 7.6l3.6.4" stroke="#b8d4fa" stroke-width="0.6"/></svg></div>
<div class="ic" style="left:0;top:0;transform:translate(579.00px,449.60px);background:linear-gradient(170deg,#150c66,#2a1590);"><svg viewBox="0 0 13 13"><g fill="none" stroke-linecap="round"><circle cx="6.5" cy="7" r="2.5" stroke="#3a6cf5" stroke-width="1.1"/><path d="M4.6 5.2L6.6 3.2l2 2" stroke="#25c6e6" stroke-width="1"/><path d="M8.6 8.6a2.5 2.5 0 0 1-3.4.6" stroke="#6a4df0" stroke-width="1.1"/></g><circle cx="6.5" cy="6.8" r="0.7" fill="#25c6e6"/></svg></div>
<div class="b" style="left:614.00px;top:449.45px;width:18.90px;height:13.60px;background:#e3ebfc;border-radius:2.5px;"></div>
<div class="t" style="top:449.45px;height:14px;line-height:14px;font-size:8.3px;color:#3558d6;font-weight:700;left:523.45px;width:200px;text-align:center;">top</div>
<div class="b" style="left:638.30px;top:449.45px;width:13.50px;height:13.60px;background:#ece7fa;border-radius:2.5px;"></div>
<div class="t" style="top:449.45px;height:14px;line-height:14px;font-size:8.3px;color:#6a4fc4;font-weight:700;left:545.05px;width:200px;text-align:center;">ai</div>
<div class="t" style="top:449.95px;height:14px;line-height:14px;font-size:10.4px;color:#4a4a4a;font-weight:400;right:287.50px;text-align:right;">$ 5,37</div>
<div class="t" style="top:449.95px;height:14px;line-height:14px;font-size:10.4px;color:#4a4a4a;font-weight:400;right:220.70px;text-align:right;">$ 531,00</div>
<div class="t" style="top:449.95px;height:14px;line-height:14px;font-size:10.4px;color:#4a4a4a;font-weight:400;right:154.10px;text-align:right;">$ 721,00</div>
<div class="t" style="top:449.95px;height:14px;line-height:14px;font-size:10.4px;color:#4a4a4a;font-weight:400;right:99.70px;text-align:right;">35,78&thinsp;%</div>
<div class="t" style="top:449.95px;height:14px;line-height:14px;font-size:10.4px;color:#4a4a4a;font-weight:400;right:58.00px;text-align:right;">303</div>
<div class="b" style="left:113.00px;top:478.50px;width:11.00px;height:11.00px;background:#fff;border-radius:2.5px;border:1px solid #c8c8c8;"></div>
<div class="t" style="top:477.65px;height:14px;line-height:14px;font-size:10.4px;color:#4a4a4a;font-weight:400;left:135.60px;">virtual friend</div>
<div class="t" style="top:477.65px;height:14px;line-height:14px;font-size:10.4px;color:#4a4a4a;font-weight:400;left:326.00px;">29</div>
<div class="b" style="left:346.00px;top:481.75px;width:69.00px;height:4.40px;background:#e9e9e9;border-radius:2.2px;"></div>
<div class="b" style="left:346.00px;top:481.75px;width:20.00px;height:4.40px;background:#ffb84d;border-radius:2.2px;"></div>
<div class="b" style="left:437.50px;top:477.05px;width:47.50px;height:13.80px;background:#e4f6ea;border-radius:2.5px;"></div>
<div class="b" style="left:441.20px;top:481.95px;width:4.00px;height:4.00px;background:#12a04a;border-radius:2px;"></div>
<div class="t" style="top:477.65px;height:14px;line-height:14px;font-size:8.15px;color:#178a42;font-weight:700;left:448.60px;">Running</div>
<div class="ic" style="left:0;top:0;transform:translate(506.80px,477.30px);background:linear-gradient(160deg,#959ff9,#7c87ee);"><svg viewBox="0 0 13 13"><g fill="none" stroke="#fff" stroke-width="0.9" opacity="0.92"><ellipse cx="6.5" cy="6.5" rx="4.9" ry="2.5" transform="rotate(45 6.5 6.5)"/><ellipse cx="6.5" cy="6.5" rx="4.9" ry="2.5" transform="rotate(-45 6.5 6.5)"/></g><circle cx="6.5" cy="6.5" r="0.9" fill="#aab3fb"/></svg></div>
<div class="ic" style="left:0;top:0;transform:translate(524.85px,477.30px);background:linear-gradient(170deg,#150c66,#2a1590);"><svg viewBox="0 0 13 13"><g fill="none" stroke-linecap="round"><circle cx="6.5" cy="7" r="2.5" stroke="#3a6cf5" stroke-width="1.1"/><path d="M4.6 5.2L6.6 3.2l2 2" stroke="#25c6e6" stroke-width="1"/><path d="M8.6 8.6a2.5 2.5 0 0 1-3.4.6" stroke="#6a4df0" stroke-width="1.1"/></g><circle cx="6.5" cy="6.8" r="0.7" fill="#25c6e6"/></svg></div>
<div class="ic" style="left:0;top:0;transform:translate(542.90px,477.30px);background:linear-gradient(140deg,#4a6cff,#6e3bee);"><svg viewBox="0 0 13 13"><ellipse cx="5.3" cy="5.5" rx="2.8" ry="2.5" fill="#fff"/><ellipse cx="8.4" cy="7.9" rx="2.4" ry="2" fill="#fff" stroke="#5b4cf2" stroke-width="0.6"/></svg></div>
<div class="ic" style="left:0;top:0;transform:translate(560.95px,477.30px);background:linear-gradient(180deg,#fde2c6,#f9cfa6);"><svg viewBox="0 0 13 13"><g transform="rotate(9 6.5 6.5)"><ellipse cx="6.5" cy="6.9" rx="4.3" ry="2.1" fill="#fdeee6" stroke="#cf3310" stroke-width="2.2"/><path d="M2.1 6.3a4.4 2.3 0 0 1 8.8 0" fill="none" stroke="#ffac1c" stroke-width="2"/></g></svg></div>
<div class="ic" style="left:0;top:0;transform:translate(579.00px,477.30px);background:linear-gradient(135deg,#ffd822,#ff8f10);"><svg viewBox="0 0 13 13"><path d="M3.3 2.9h6.6a.7.7 0 0 1 .7.7v4.9a.7.7 0 0 1-.7.7H5.3L3.2 10.8V9.2a.7.7 0 0 1-.6-.7V3.6a.7.7 0 0 1 .7-.7z" fill="#fff"/></svg></div>
<div class="b" style="left:614.00px;top:477.15px;width:24.50px;height:13.60px;background:#e3f3cf;border-radius:2.5px;"></div>
<div class="t" style="top:477.15px;height:14px;line-height:14px;font-size:8.3px;color:#4c8a14;font-weight:700;left:526.25px;width:200px;text-align:center;">good</div>
<div class="t" style="top:477.65px;height:14px;line-height:14px;font-size:10.4px;color:#4a4a4a;font-weight:400;right:287.50px;text-align:right;">$ 2,96</div>
<div class="t" style="top:477.65px;height:14px;line-height:14px;font-size:10.4px;color:#4a4a4a;font-weight:400;right:220.70px;text-align:right;">$ 492,00</div>
<div class="t" style="top:477.65px;height:14px;line-height:14px;font-size:10.4px;color:#4a4a4a;font-weight:400;right:154.10px;text-align:right;">$ 528,00</div>
<div class="t" style="top:477.65px;height:14px;line-height:14px;font-size:10.4px;color:#4a4a4a;font-weight:400;right:99.70px;text-align:right;">14,05&thinsp;%</div>
<div class="t" style="top:477.65px;height:14px;line-height:14px;font-size:10.4px;color:#4a4a4a;font-weight:400;right:58.00px;text-align:right;">296</div>
<div class="t" style="top:504.90px;height:14px;line-height:14px;font-size:9.9px;color:#3c3c3c;font-weight:700;left:135.80px;">Totals</div>
<div class="t" style="top:504.90px;height:14px;line-height:14px;font-size:10.4px;color:#333;font-weight:400;right:220.70px;text-align:right;">$ 14 198,00</div>
<div class="t" style="top:504.90px;height:14px;line-height:14px;font-size:10.4px;color:#333;font-weight:400;right:154.10px;text-align:right;">$ 18 589,00</div>
<div class="t" style="top:504.90px;height:14px;line-height:14px;font-size:10.4px;color:#333;font-weight:400;right:99.70px;text-align:right;">28,18&thinsp;%</div>
<div class="t" style="top:504.90px;height:14px;line-height:14px;font-size:10.4px;color:#333;font-weight:400;right:58.00px;text-align:right;">7 237</div>
<svg width="1046" height="615" viewBox="0 0 1046 615" style="z-index:4"><g fill="none" stroke-linecap="round" stroke-linejoin="round">
<circle cx="694.8" cy="317.2" r="5" stroke="#4a6cf0" stroke-width="1"/><path d="M694.8 314.4v2.9l1.9 1.1" stroke="#4a6cf0" stroke-width="1"/>
<path d="M691 345.6l2.6 2.6 5-5.6" stroke="#1db954" stroke-width="1.1"/>
<circle cx="694.8" cy="373.1" r="5" stroke="#4a6cf0" stroke-width="1"/><path d="M694.8 370.2v2.9l1.9 1.1" stroke="#4a6cf0" stroke-width="1"/>
<path d="M691 401.2l2.6 2.6 5-5.6" stroke="#1db954" stroke-width="1.1"/>
<path d="M691 428.9l2.6 2.6 5-5.6" stroke="#1db954" stroke-width="1.1"/>
<path d="M691 456.6l2.6 2.6 5-5.6" stroke="#1db954" stroke-width="1.1"/>
<path d="M691 484.3l2.6 2.6 5-5.6" stroke="#1db954" stroke-width="1.1"/>
<path d="M116.4 401.1l1.9 1.9 3.5-3.9" stroke="#fff" stroke-width="1.2"/>
</g></svg>
<div class="b" style="left:110.00px;top:533.20px;width:17.40px;height:17.00px;background:#ff7d4d;border-radius:4px;"></div>
<div class="t" style="top:535.00px;height:14px;line-height:14px;font-size:10.4px;color:#fff;font-weight:700;left:18.70px;width:200px;text-align:center;">1</div>
<div class="b" style="left:897.00px;top:533.40px;width:34.30px;height:16.60px;background:#efefef;border-radius:3px;"></div>
<div class="t" style="top:534.70px;height:14px;line-height:14px;font-size:9px;color:#555;font-weight:400;left:902.60px;">50</div>
<svg width="1046" height="615" viewBox="0 0 1046 615"><path d="M918.6 540.6l2.6 2.4 2.6-2.4" fill="none" stroke="#555" stroke-width="0.9" stroke-linecap="round" stroke-linejoin="round"/></svg>
<div class="t" style="top:534.70px;height:14px;line-height:14px;font-size:8.85px;color:#444;font-weight:400;right:52.70px;text-align:right;">rows per page</div>
</body></html>
